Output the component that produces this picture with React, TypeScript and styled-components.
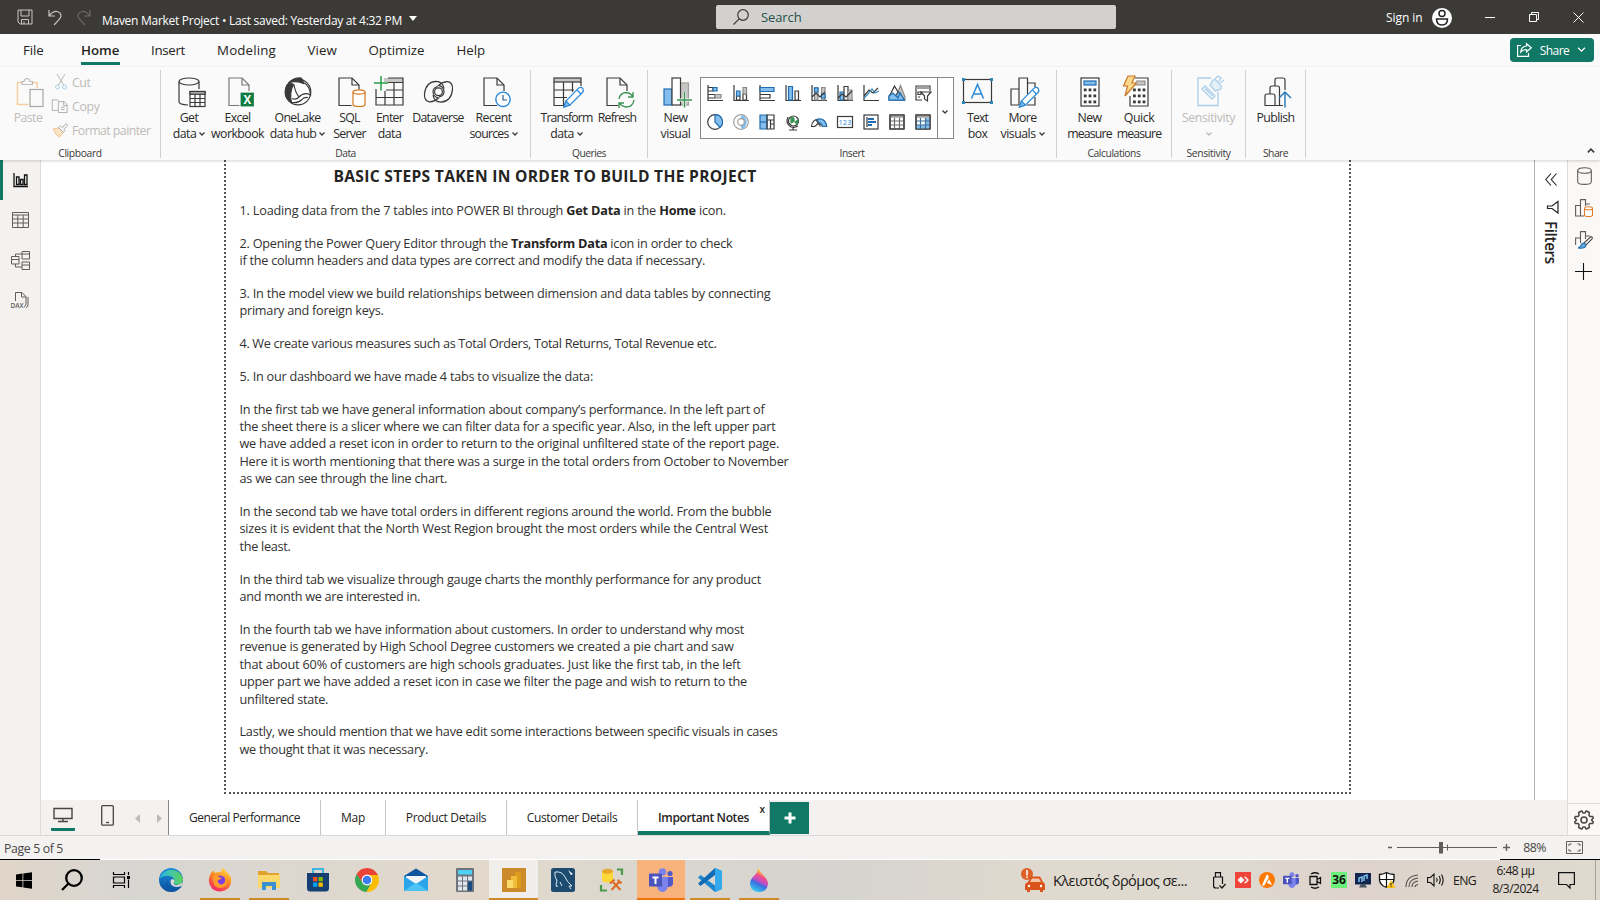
import React, { ReactNode, useLayoutEffect, useRef, useState } from "react";
import styled, { createGlobalStyle } from "styled-components";

const Global = createGlobalStyle`
  * { box-sizing: border-box; }
  html, body { margin: 0; padding: 0; }
  body { font-family: "Open Sans", "Noto Sans", sans-serif; background: #fff; color: #252423; overflow: hidden; }
  svg { display: block; flex: none; overflow: visible; }
`;

/* Text whose tracking is tuned so that it spans a given width */
const FitSpan = styled.span`
  display: inline-block;
  white-space: pre;
  flex: none;
`;
const Fit = ({ w, children }: { w: number; children: ReactNode }) => {
  const ref = useRef<HTMLSpanElement>(null);
  const [ls, setLs] = useState<number | null>(null);
  useLayoutEffect(() => {
    const el = ref.current;
    if (!el || ls !== null) return;
    const n = Math.max(1, (el.textContent || "").length);
    setLs((w - el.getBoundingClientRect().width) / n);
  }, [w, ls]);
  return (
    <FitSpan ref={ref} style={ls === null ? undefined : { letterSpacing: `${ls}px` }}>
      {children}
    </FitSpan>
  );
};

const Icon = ({ w = 30, h = 30, children }: { w?: number; h?: number; children: ReactNode }) => (
  <svg width={w} height={h} viewBox={`0 0 ${w} ${h}`} fill="none" stroke="#3b3a39" strokeWidth="1.2">
    {children}
  </svg>
);

const Window = styled.div`
  width: 1600px;
  height: 900px;
  display: flex;
  flex-direction: column;
  overflow: hidden;
`;
const Slot = styled.div<{ $w: number }>`
  width: ${(p) => p.$w}px;
  flex: none;
  height: 100%;
  display: flex;
  align-items: center;
  justify-content: center;
`;
const Grow = styled.div`
  flex: 1;
`;

/* ---------- title bar ---------- */
const TitleBar = styled.div`
  height: 34px;
  flex: none;
  background: #3b3a37;
  color: #fff;
  display: flex;
  align-items: center;
  font-size: 12px;
`;
const DocName = styled.div`
  display: flex;
  align-items: center;
  gap: 7px;
  margin-left: -5px;
  padding-top: 6px;
  width: 614px;
  flex: none;
`;
const DropMark = styled.div`
  padding-bottom: 4px;
`;
const SearchBox = styled.div`
  width: 400px;
  flex: none;
  height: 24px;
  border-radius: 2px;
  background: #d2d1d0;
  color: #24504a;
  display: flex;
  align-items: center;
  gap: 12px;
  padding-left: 17px;
  font-size: 13px;
`;
const SignIn = styled.div`
  margin-left: 270px;
  display: flex;
  align-items: center;
  gap: 9px;
  padding-top: 1px;
  width: 94px;
  flex: none;
`;

/* ---------- menu ---------- */
const Menu = styled.div`
  height: 33px;
  flex: none;
  background: #fafafa;
  display: flex;
  align-items: flex-start;
  padding-left: 23px;
  font-size: 13.300px;
  color: #252423;
`;
const MenuItem = styled.div<{ $gap: number; $on?: boolean }>`
  height: 31px;
  line-height: 32px;
  margin-right: ${(p) => p.$gap}px;
  font-weight: ${(p) => (p.$on ? 600 : 400)};
  border-bottom: ${(p) => (p.$on ? "3px solid #117865" : "none")};
`;
const ShareButton = styled.div`
  margin: 4px 6px 0 auto;
  width: 84px;
  height: 24px;
  border-radius: 4px;
  background: #117865;
  color: #fff;
  font-size: 12px;
  display: flex;
  align-items: center;
  justify-content: space-between;
  padding: 0 8px 0 7px;
`;

/* ---------- ribbon ---------- */
const Ribbon = styled.div`
  height: 93px;
  flex: none;
  background: #fafafa;
  display: flex;
  padding-top: 3px;
  box-shadow: 0 1px 3px rgba(0, 0, 0, 0.18);
  position: relative;
  z-index: 1;
`;
const Group = styled.div<{ $w: number }>`
  width: ${(p) => p.$w}px;
  height: 88px;
  flex: none;
  border-right: 1px solid #d0cfce;
  display: flex;
  flex-direction: column;
`;
const GroupBody = styled.div<{ $pad?: number }>`
  height: 76px;
  flex: none;
  padding-left: ${(p) => p.$pad || 0}px;
  display: flex;
`;
const GroupLabel = styled.div`
  height: 12px;
  line-height: 15px;
  text-align: center;
  font-size: 10.300px;
  color: #3b3a39;
`;
const Button = styled.div<{ $w: number; $off?: boolean }>`
  width: ${(p) => p.$w}px;
  flex: none;
  display: flex;
  flex-direction: column;
  align-items: center;
  padding-top: 7px;
  font-size: 12.300px;
  color: ${(p) => (p.$off ? "#bdbbb9" : "#2b2a29")};
`;
const ButtonIcon = styled.div<{ $dx: number }>`
  margin-left: ${(p) => p.$dx * 2}px;
`;
const ButtonLine = styled.div`
  height: 16px;
  line-height: 16px;
  display: flex;
  align-items: center;
  gap: 3px;
  white-space: nowrap;
  &:nth-child(2) { margin-top: 3px; }
`;
const ClipColumn = styled.div`
  display: flex;
  flex-direction: column;
  color: #bdbbb9;
  font-size: 12.300px;
`;
const ClipRow = styled.div`
  height: 24px;
  display: flex;
  align-items: center;
  gap: 4px;
`;
const Gallery = styled.div`
  width: 254px;
  flex: none;
  height: 62px;
  margin-top: 7px;
  border: 1px solid #8a8886;
  background: #fff;
  display: flex;
`;
const GalleryGrid = styled.div`
  width: 236px;
  flex: none;
  display: grid;
  grid-template-columns: repeat(9, 26px);
  grid-template-rows: 29px 29px;
  padding-left: 1px;
`;
const GalleryCell = styled.div`
  display: flex;
  align-items: center;
  justify-content: center;
`;
const GalleryMore = styled.div`
  width: 16px;
  border-left: 1px solid #8a8886;
  display: flex;
  align-items: center;
  justify-content: center;
  padding: 7px 2px 0 0;
`;
const Collapse = styled.div`
  margin-left: auto;
  align-self: flex-end;
  padding: 0 5px 7px 0;
`;

const Chev = ({ c = "#3b3a39", s = 6, up = false }: { c?: string; s?: number; up?: boolean }) => (
  <svg width={s} height={s / 2 + 1} viewBox="0 0 6 4" fill="none" stroke={c} strokeWidth={s > 8 ? 0.9 : 1.3}>
    <path d={up ? "M.5 3.5 3 1l2.5 2.5" : "M.5.5 3 3 5.5.5"} />
  </svg>
);

const pencil = (x: number, y: number) => (
  <g transform={`translate(${x} ${y})`}>
    <path d="M1 20 3 14 15.5 1.2Q18-.5 19.8 1.500Q21.200 3.500 19.500 5.500L7 18Z" fill="#fff" stroke="#2b88d8" />
    <path d="M1 20 3 14 7 18Z" fill="#83beec" stroke="#2b88d8" />
    <path d="M14 3l4 4" stroke="#2b88d8" />
  </g>
);
const sheet = (c = "#3b3a39") => (
  <>
    <path d="M14 28.500H1V1H14L21 8V14" stroke={c} />
    <path d="M14 1V8H21" stroke={c} />
  </>
);
const dots = (x: number, y: number) =>
  [0, 1, 2].flatMap((r) =>
    [0, 1, 2].map((c) => (
      <rect key={`${r}${c}`} x={x + c * 4.8} y={y + r * 6} width="2.8" height="2.800" fill="#3b3a39" stroke="none" />
    ))
  );

const dataverseLobe = "M14 6.500Q9 7.500 9 12Q9.500 17 14.500 18Q10 22 5.500 21.800Q0 21 .5 14Q1.500 2 12 1.300Q19 1.500 20 8.500";

const icons: Record<string, ReactNode> = {
  paste: (
    <Icon w={28}>
      <path d="M12.500 27.500H1.500V5.500H6M16 5.500H21V11" stroke="#f5cf9f" strokeWidth="1.500" />
      <path d="M6 7.500V4.500H8Q8.500 1.500 11 1.500T14 4.500H16.500V7.500Z" stroke="#bebbb8" />
      <rect x="14" y="12.500" width="13" height="17" stroke="#a9a7a5" />
    </Icon>
  ),
  getData: (
    <Icon w={28}>
      <ellipse cx="11" cy="4.500" rx="10" ry="3.500" />
      <path d="M1 4.500V25Q1 27.500 10 28M21 4.500V12" />
      <rect x="12" y="14.500" width="15" height="15" fill="#fff" />
      <rect x="12" y="14.500" width="15" height="2.800" fill="#b3b0ad" />
      <path d="M12 21.500H27M12 25.500H27M17 17.500V29.500M22 17.500V29.500" />
    </Icon>
  ),
  excel: (
    <Icon w={27}>
      {sheet("#7a7876")}
      <rect x="12" y="15" width="14.500" height="15" fill="#107c41" stroke="#fafafa" />
      <text x="19.300" y="26.800" textAnchor="middle" fontSize="11.500" fontWeight="700" fill="#fff" stroke="none">X</text>
    </Icon>
  ),
  onelake: (
    <Icon w={28}>
      <circle cx="14" cy="15" r="12.800" fill="#fff" />
      <path d="M4.500 6Q10 .5 17 1Q19.500 3 19.500 6.500Q12 3 4.500 6Z" fill="#3b3a39" />
      <path d="M3.500 7.500Q7 5.500 9.500 7.500Q5 16 7.500 25.500Q-2 20 3.500 7.500Z" fill="#3b3a39" />
      <path d="M19.500 5.500Q26 9 26.500 18Q20 14.500 15 20Q12 23.500 8 21.500M10 7.500Q11 15 15 20" />
      <path d="M8 25.500Q14 26.500 18 22.500Q20 20 24 20.500" />
    </Icon>
  ),
  sql: (
    <Icon w={28}>
      {sheet()}
      <rect x="13.500" y="12.500" width="14" height="18" fill="#fafafa" stroke="none" />
      <path d="M15 15V27.500Q15 29.500 21 29.500T27 27.500V15" fill="#fff" stroke="#d5781f" />
      <ellipse cx="21" cy="15" rx="6" ry="2.200" fill="#fff" stroke="#d5781f" />
    </Icon>
  ),
  enter: (
    <Icon w={30}>
      <rect x="10" y="1" width="19" height="4" fill="#c8c6c4" stroke="none" />
      <path d="M14 1H29V28H2V12M14 5.500H29M12 13H29M2 20.500H29M11 14V28M20 5.500V28" />
      <path d="M7 -1V13.500M0 6H14" stroke="#2a9d4a" strokeWidth="1.500" />
    </Icon>
  ),
  dataverse: (
    <Icon w={29}>
      <g transform="translate(0 3)">
        <path d={dataverseLobe} />
        <path d={dataverseLobe} transform="rotate(180 14.500 11.700)" />
        <circle cx="14.500" cy="11.700" r="3.900" />
      </g>
    </Icon>
  ),
  recent: (
    <Icon w={28}>
      {sheet()}
      <circle cx="20" cy="22.300" r="7.200" fill="#fff" stroke="#2b88d8" strokeWidth="1.400" />
      <path d="M20 18V23H24" stroke="#2b5a88" />
    </Icon>
  ),
  transform: (
    <Icon w={30}>
      <rect x="1" y="1" width="27" height="4" fill="#c8c6c4" />
      <path d="M28 5V9M12 28.500H1V5M1 13H21M1 20.500H14M10.500 5V28M19.500 5V15" />
      {pencil(10, 10)}
    </Icon>
  ),
  refresh: (
    <Icon w={28}>
      {sheet()}
      <rect x="12" y="15" width="16" height="15" fill="#fafafa" stroke="none" />
      <g stroke="#3b9457" strokeWidth="1.400">
        <path d="M13 22Q14 16 20 15.500Q25 16 27 20M27 15V20H22" />
        <path d="M28 23Q27 30 20 30Q15 29 13.500 26M13 31V26H18" />
      </g>
    </Icon>
  ),
  newVisual: (
    <Icon w={29}>
      <rect x="17" y="6" width="8.500" height="22" fill="#c8c6c4" stroke="#a19f9d" />
      <rect x="1" y="12" width="8" height="16" fill="#83beec" stroke="#1f6cb0" />
      <rect x="9" y="1" width="8.500" height="27" fill="#fff" />
      <path d="M21.500 15V30.500M14 23H29" stroke="#fafafa" strokeWidth="3" />
      <path d="M21.500 15V30.500M14 23H29" stroke="#3b9457" strokeWidth="1.500" />
    </Icon>
  ),
  textBox: (
    <Icon w={31}>
      <rect x="1.500" y="2.500" width="28" height="23" />
      <path d="M0 1h3v3h-3zM28 1h3v3h-3zM0 24h3v3h-3zM28 24h3v3h-3z" fill="#2b88b8" stroke="none" />
      <path d="M9.500 21.500 15.500 7.500 21.500 21.500M11.500 17H19.500" stroke="#2b88d8" strokeWidth="1.500" />
    </Icon>
  ),
  moreVisuals: (
    <Icon w={29}>
      <path d="M9 28H1V12H9M9 28V1H17.500V17M17.500 6H25V10M25 20V28H17" />
      {pencil(8.500, 10)}
    </Icon>
  ),
  newMeasure: (
    <Icon w={20}>
      <rect x="1" y="1" width="18" height="28" fill="#fff" />
      <rect x="4" y="4" width="12" height="4" fill="#83beec" stroke="#1f6cb0" />
      {dots(3.800, 11.500)}
    </Icon>
  ),
  quick: (
    <Icon w={27}>
      <path d="M13 1H26V29H8V19" fill="#fff" />
      <path d="M14 4H23V8H12" fill="#c8c6c4" stroke="#8a8886" />
      {dots(11, 11.500)}
      <path d="M6-1H13L10 6H14.500L3 19 5.500 9H1.500Z" fill="#fcd98a" stroke="#c8782a" />
    </Icon>
  ),
  sensitivity: (
    <Icon w={28}>
      <g stroke="#a9cfe8" strokeWidth="1.300">
        <path d="M14 1H1V28.500H21V15" />
        <path d="M5 12 8 9 18 19 15 22ZM8 11.500 15.500 19" />
        <path d="M13 8 16 3Q18 2 20 4L24 9Q25 12 22 13L18 14Z" fill="#e4f0f8" />
        <path d="M18 2 21 -1 24 1 22 4M23 6 27 3" />
      </g>
    </Icon>
  ),
  publish: (
    <Icon w={28}>
      <path d="M1 28.500V19Q1 17 3 17H9Q11 17 11 19V28.500ZM6 17V11Q6 9 8 9H13.500Q15.500 9 15.500 11V28.500M11 9V3Q11 1 13 1H19Q21 1 21 3V13M11 28.500H19" />
      <path d="M21 30.500V15M15 21 21 15 27 21" stroke="#2b7fb8" strokeWidth="1.500" />
    </Icon>
  ),
};

const B = "#83beec";
const D = "#1f6cb0";
const galleryIcons: ReactNode[] = [
  <><path d="M1 0V15.500H16" /><path d="M1 2.500H6V6H1M1 9.500H8V13H1" /><path d="M6 2.500h4V6H6z" fill={B} stroke={D} /><path d="M8 9.500h6V13H8z" fill="#c8c6c4" stroke="#8a8886" /></>,
  <><path d="M1 0V15.500H16" /><path d="M3.500 11H7V15H3.500zM10 9H13.500V15H10z" /><path d="M3.500 6H7v5H3.500z" fill={B} stroke={D} /><path d="M10 2.500h3.500V9H10z" fill="#c8c6c4" stroke="#8a8886" /></>,
  <><path d="M1 0V15.500H16" /><path d="M1 2.500h14V6.500H1z" fill={B} stroke={D} /><path d="M1 9.500H11V13H1" /></>,
  <><path d="M1 0V15.500H16" /><path d="M3.500 1.500H7.500V15h-4z" fill={B} stroke={D} /><path d="M10 6h3.500v9H10z" /></>,
  <><path d="M1 0V15.500H16" /><path d="M3.500 2.500H7v12.500H3.500zM10.500 2.500H14v12.500h-3.500z" fill="#c8c6c4" stroke="#8a8886" /><path d="M3.500 3H7v4H3.500zM10.500 9H14v4h-3.500z" fill={B} stroke={D} /><path d="M1 12 5 8 9 12 14 7" /></>,
  <><path d="M1 0V15.500H16" /><path d="M3 7h4v8H3z" fill={B} stroke={D} /><path d="M7 1.500h4v13.500H7z" fill="#fff" /><path d="M11 5h4v10h-4z" fill="#c8c6c4" stroke="#8a8886" /><path d="M1 13 5 9 9 12 15 6" /></>,
  <><path d="M1 0V15.500H16" /><path d="M1 11 6 5 10 8 15 3" /><path d="M1 13 5 9 9 4 12 8 16 6" stroke="#2b88b8" /></>,
  <><path d="M6 15 11.500 .5 16 12V15z" fill="#c8c6c4" stroke="#8a8886" /><path d="M0 15V11L5.500 5 11 8 15 15z" fill={B} stroke={D} /><path d="M1 10 5.500 1 9 7 5 13Z" fill="#fff" /><path d="M0 15.200V11L4 8 9 13 11 8 15.500 15.200z" fill={B} stroke={D} /></>,
  <><path d="M15 6V1H1V15H7" fill="#fff" /><path d="M1 3H15" strokeWidth="2" stroke="#a19f9d" /><path d="M3 7h3v2.500H3zM3 12h2" /><path d="M6 7H16L12.500 11V16L9.500 14V11Z" fill="#fff" /></>,
  <><circle cx="8" cy="8" r="7.300" fill="#fff" /><path d="M8 8V.7A7.300 7.300 0 0 1 13 13.500Z" fill={B} stroke={D} /></>,
  <><circle cx="8" cy="8" r="7.300" stroke="#a19f9d" /><path d="M8 3A5.500 5.500 0 0 1 8 13" stroke={B} strokeWidth="5" /><circle cx="8" cy="8" r="3.300" fill="#fff" stroke="#a19f9d" /></>,
  <><path d="M1 1h7v14H1z" fill={B} stroke={D} /><path d="M1 8h7" stroke={D} /><path d="M8 1h7v14H8zM8 6H15M11.500 6V15M11.500 10H15" /></>,
  <><circle cx="8.500" cy="7" r="5" fill="#fff" /><path d="M6 4Q8 2 9 5T6 9ZM10 8l3-2-1 4z" fill="#3b9457" stroke="#3b9457" /><path d="M3 3Q0 9 6 13Q10 14 13 12M8 13V16M4 16H12" /></>,
  <><path d="M0.500 12.500A7.500 7.500 0 0 1 15.500 12.500H11.500A3.500 3.500 0 0 0 5 11.500L3.500 12.500Z" fill="#fff" /><path d="M6 5.500Q14 3 15.700 12.500H11.500Q11 9 8 8.500Z" fill={B} stroke={D} /><path d="M5 6 9.500 12.500" /></>,
  <><rect x="0.500" y="2.500" width="15" height="11" fill="#fff" /><text x="8" y="10.800" textAnchor="middle" fontSize="7.500" fill="#2b88d8" stroke="none">123</text></>,
  <><rect x="1" y="1" width="14" height="14" fill="#fff" /><path d="M4 3V13" /><path d="M5 5h6M5 8h8M5 11h4" stroke={D} strokeWidth="1.800" /></>,
  <><rect x="1" y="1" width="14" height="14" fill="#fff" /><path d="M1 2.500H15" strokeWidth="2.500" stroke="#a19f9d" /><path d="M1 7H15M1 11H15M5.500 4V15M10.500 4V15" stroke="#6f6d6b" /><path d="M1 1V15H15V1z" /></>,
  <><rect x="1" y="1" width="14" height="14" fill="#fff" /><path d="M10.500 4H15V15H1V11H10.500z" fill={B} stroke="none" /><path d="M1 2.500H15" strokeWidth="2.500" stroke="#a19f9d" /><path d="M1 7H15M1 11H15M5.500 4V15M10.500 4V15" stroke="#3f6f9c" /><path d="M1 1V15H15V1z" /></>,
];

type Line = [string, number];
const RibbonButton = ({ w, icon, dx = 0, a, b, arrow, off }: { w: number; icon: string; dx?: number; a: Line; b?: Line; arrow?: boolean; off?: boolean }) => (
  <Button $w={w} $off={off}>
    <ButtonIcon $dx={dx}>{icons[icon]}</ButtonIcon>
    <ButtonLine><Fit w={a[1]}>{a[0]}</Fit></ButtonLine>
    {(b || arrow) && (
      <ButtonLine>
        {b && <Fit w={b[1]}>{b[0]}</Fit>}
        {arrow && <Chev c={off ? "#bdbbb9" : "#3b3a39"} />}
      </ButtonLine>
    )}
  </Button>
);

/* ---------- work area ---------- */
const Work = styled.div`
  height: 675px;
  flex: none;
  display: flex;
`;
const LeftRail = styled.div`
  width: 41px;
  flex: none;
  background: #f3f2f1;
  border-right: 1px solid #dedcda;
`;
const ViewButton = styled.div<{ $on?: boolean }>`
  height: 40px;
  border-left: 3px solid ${(p) => (p.$on ? "#117865" : "transparent")};
  padding-right: 2px;
  display: flex;
  align-items: center;
  justify-content: center;
`;
const Center = styled.div`
  flex: 1;
  display: flex;
  flex-direction: column;
`;
const CanvasRow = styled.div`
  height: 640px;
  flex: none;
  display: flex;
`;
const Canvas = styled.div`
  flex: 1;
  background: #fff;
  padding: 0 0 6px 183px;
`;
const Page = styled.div`
  width: 1127px;
  height: 634px;
  border: 2px dotted #555;
  border-top: none;
  padding: 7px 0 0 13.500px;
  font-size: 12.700px;
  line-height: 17.450px;
  color: #333231;
`;
const Heading = styled.div`
  padding-left: 94px;
  font-size: 15.600px;
  line-height: 19px;
  font-weight: 700;
  color: #252423;
  margin-bottom: 16px;
`;
const Para = styled.div`
  margin-bottom: 15.300px;
  b { color: #252423; }
`;
const ParaLine = styled.div`
  height: 17.450px;
  white-space: nowrap;
`;
const FiltersPane = styled.div`
  width: 33px;
  border-left: 1px solid #b3b0ad;
  background: #fff;
  display: flex;
  flex-direction: column;
  align-items: center;
  padding: 13px 0 0 0;
`;
const FiltersLabel = styled.div`
  writing-mode: vertical-rl;
  font-size: 15.300px;
  line-height: 18px;
  font-weight: 600;
  letter-spacing: -0.400px;
  margin-top: 7px;
`;
const RightRail = styled.div`
  width: 33px;
  flex: none;
  background: #faf9f8;
  border-left: 1px solid #dedcda;
  display: flex;
  flex-direction: column;
  align-items: center;
`;
const RailItem = styled.div`
  height: 32px;
  display: flex;
  align-items: center;
`;
const RailFoot = styled.div`
  margin-top: auto;
  width: 100%;
  height: 32px;
  border-top: 1px solid #dedcda;
  display: flex;
  align-items: center;
  justify-content: center;
`;

/* ---------- page tabs ---------- */
const Tabs = styled.div`
  height: 35px;
  flex: none;
  background: #f3f2f1;
  display: flex;
`;
const LayoutTools = styled.div`
  width: 128px;
  display: flex;
  align-items: flex-start;
  padding: 5px 0 0 10px;
  border-right: 1px solid #8a8886;
`;
const LayoutTool = styled.div<{ $w: number; $ml?: number; $on?: boolean }>`
  width: ${(p) => p.$w}px;
  margin-left: ${(p) => p.$ml || 0}px;
  height: 26px;
  border-bottom: 3px solid ${(p) => (p.$on ? "#117865" : "transparent")};
  border-radius: 1px;
  display: flex;
  justify-content: center;
`;
const Tab = styled.div<{ $w: number; $on?: boolean }>`
  width: ${(p) => p.$w}px;
  background: #fff;
  border-right: 1px solid #c8c6c4;
  border-bottom: ${(p) => (p.$on ? "4px solid #117865" : "none")};
  font-weight: ${(p) => (p.$on ? 600 : 400)};
  font-size: 12px;
  line-height: 35px;
  text-align: center;
  position: relative;
`;
const TabClose = styled.span`
  position: absolute;
  right: 4px;
  top: 2px;
  font-size: 10px;
  line-height: 14px;
`;
const AddTab = styled.div`
  width: 39px;
  height: 32px;
  margin-top: 2px;
  background: #117865;
  display: flex;
  align-items: center;
  justify-content: center;
`;

/* ---------- status bar ---------- */
const Status = styled.div`
  height: 25px;
  flex: none;
  background: #f3f2f1;
  border-top: 1px solid #dcdad8;
  border-bottom: 1px solid #fff;
  display: flex;
  align-items: center;
  padding-left: 4px;
  font-size: 12.300px;
  color: #484644;
  position: relative;
`;
const PageCount = styled.div`
  padding-top: 2px;
`;
const Edge = styled.div<{ $right?: boolean }>`
  position: absolute;
  bottom: -1px;
  ${(p) => (p.$right ? "right: 0;" : "left: 0;")}
  width: 100px;
  height: 1px;
  background: #000;
`;

/* ---------- taskbar ---------- */
const Taskbar = styled.div`
  height: 40px;
  flex: none;
  display: flex;
  background: linear-gradient(90deg, #e0d5c8 0%, #d8d6d2 8%, #dcd7cf 18%, #e2d9cb 30%, #dad6cf 42%, #d6d4d0 52%, #e0d9ce 66%, #dfdad1 75%, #ddd3cc 85%, #dfd9ce 100%);
  color: #1b1a19;
`;
const TaskButton = styled.div<{ $w: number; $bg?: string; $line?: string; $inset?: number }>`
  width: ${(p) => p.$w}px;
  flex: none;
  height: 40px;
  display: flex;
  align-items: center;
  justify-content: center;
  background: ${(p) => p.$bg || "transparent"};
  position: relative;
  &::after {
    content: "";
    position: absolute;
    bottom: 0;
    left: ${(p) => p.$inset || 0}px;
    right: ${(p) => p.$inset || 0}px;
    height: 2px;
    background: ${(p) => p.$line || "transparent"};
  }
`;
const News = styled.div`
  display: flex;
  align-items: center;
  gap: 8px;
  font-size: 14.500px;
  width: 186px;
  flex: none;
`;
const Language = styled.div`
  font-size: 12.300px;
`;
const Clock = styled.div`
  width: 61px;
  flex: none;
  font-size: 12px;
  line-height: 18px;
  display: flex;
  flex-direction: column;
  align-items: center;
  padding-top: 2px;
`;
const ShowDesktop = styled.div`
  width: 5px;
  border-left: 1px solid #a5a19b;
`;

const Art = ({ s = 24, children }: { s?: number; children: ReactNode }) => (
  <svg width={s} height={s} viewBox="0 0 24 24" fill="none">{children}</svg>
);

const gold = "#cd8a2b";
const TeamsArt = ({ s }: { s?: number }) => (
  <Art s={s}>
    <circle cx="21" cy="5.500" r="2.600" fill="#5059c9" />
    <circle cx="13.500" cy="4" r="3.700" fill="#7b83eb" />
    <path d="M17 9H24V16Q23 19.500 18 19Z" fill="#5059c9" />
    <path d="M8 9H19V18Q18 24 13 24Q8 23 8 18Z" fill="#7b83eb" />
    <rect y="5.500" width="13" height="13" rx="1" fill="#4b53bc" />
    <path d="M3.500 8.500H9.500V10.500H7.500V16H5.500V10.500H3.500Z" fill="#fff" />
  </Art>
);

const notes: { lines: [ReactNode, number][] }[] = [
  { lines: [[<>1. Loading data from the 7 tables into POWER BI through <b>Get Data</b> in the <b>Home</b> icon.</>, 486.500]] },
  { lines: [[<>2. Opening the Power Query Editor through the <b>Transform Data</b> icon in order to check</>, 493], ["if the column headers and data types are correct and modify the data if necessary.", 465.500]] },
  { lines: [["3. In the model view we build relationships between dimension and data tables by connecting", 531], ["primary and foreign keys.", 144]] },
  { lines: [["4. We create various measures such as Total Orders, Total Returns, Total Revenue etc.", 477]] },
  { lines: [["5. In our dashboard we have made 4 tabs to visualize the data:", 353.500]] },
  { lines: [
    ["In the first tab we have general information about company’s performance. In the left part of", 525],
    ["the sheet there is a slicer where we can filter data for a specific year. Also, in the left upper part", 536],
    ["we have added a reset icon in order to return to the original unfiltered state of the report page.", 539.500],
    ["Here it is worth mentioning that there was a surge in the total orders from October to November", 549],
    ["as we can see through the line chart.", 207.500],
  ] },
  { lines: [
    ["In the second tab we have total orders in different regions around the world. From the bubble", 532],
    ["sizes it is evident that the North West Region brought the most orders while the Central West", 528.500],
    ["the least.", 51],
  ] },
  { lines: [["In the third tab we visualize through gauge charts the monthly performance for any product", 521.500], ["and month we are interested in.", 180.500]] },
  { lines: [
    ["In the fourth tab we have information about customers. In order to understand why most", 504.500],
    ["revenue is generated by High School Degree customers we created a pie chart and saw", 494],
    ["that about 60% of customers are high schools graduates. Just like the first tab, in the left", 501],
    ["upper part we have added a reset icon in case we filter the page and wish to return to the", 507.500],
    ["unfiltered state.", 88.500],
  ] },
  { lines: [["Lastly, we should mention that we have edit some interactions between specific visuals in cases", 538], ["we thought that it was necessary.", 188.500]] },
];

export default function App() {
  return (
    <Window>
      <Global />
      <TitleBar>
        <Slot $w={49}>
          <svg width="16" height="16" viewBox="0 0 16 16" fill="none" stroke="#c8c6c4"><path d="M1 1H15V15H3L1 13ZM4 1V7H12V1M4.500 15V10.500H11.500V15M7 12.500V15" /></svg>
        </Slot>
        <Slot $w={12}>
          <svg width="14" height="15" viewBox="0 0 14 15" fill="none" stroke="#c8c6c4" strokeWidth="1.200"><path d="M1 0V6H7M1 6Q5 1 9 1.500Q13 2.500 13 6Q13 8 6 15" /></svg>
        </Slot>
        <Slot $w={46}>
          <svg width="14" height="15" viewBox="0 0 14 15" fill="none" stroke="#6b6967" strokeWidth="1.200"><path d="M13 0V6H7M13 6Q9 1 5 1.500Q1 2.500 1 6Q1 8 8 15" /></svg>
        </Slot>
        <DocName>
          <Fit w={300}>Maven Market Project • Last saved: Yesterday at 4:32 PM</Fit>
          <DropMark><svg width="8" height="5" viewBox="0 0 8 5"><path d="M0 0H8L4 5Z" fill="#fff" /></svg></DropMark>
        </DocName>
        <SearchBox>
          <svg width="16" height="16" viewBox="0 0 16 16" fill="none" stroke="#3b3a39" strokeWidth="1.200"><circle cx="10" cy="6" r="5.300" /><path d="M6.200 9.800 0.500 15.500" /></svg>
          <Fit w={40.500}>Search</Fit>
        </SearchBox>
        <SignIn>
          <Fit w={36.500}>Sign in</Fit>
          <svg width="20" height="20" viewBox="0 0 20 20" fill="none"><circle cx="10" cy="10" r="10" fill="#fff" /><circle cx="10" cy="5.500" r="3" stroke="#222" strokeWidth="1.500" /><path d="M4.500 11H15.500Q15.500 17 10 17T4.500 11Z" stroke="#222" strokeWidth="1.500" /></svg>
        </SignIn>
        <Slot $w={20}><svg width="10" height="2"><path d="M0 1.500H10" stroke="#fff" /></svg></Slot>
        <Slot $w={68}><svg width="10" height="10" viewBox="0 0 10 10" fill="none" stroke="#fff"><path d="M.5 2.500H7.500V9.500H.5ZM2.500 2V.5H9.500V7.500H8" /></svg></Slot>
        <Slot $w={20}><svg width="11" height="11" viewBox="0 0 11 11" stroke="#fff"><path d="M.5.5 10.500 10.500M10.500.5.5 10.500" /></svg></Slot>
      </TitleBar>

      <Menu>
        <MenuItem $gap={37.500}><Fit w={20.500}>File</Fit></MenuItem>
        <MenuItem $gap={31.500} $on><Fit w={38.500}>Home</Fit></MenuItem>
        <MenuItem $gap={32}><Fit w={34}>Insert</Fit></MenuItem>
        <MenuItem $gap={31.500}><Fit w={59}>Modeling</Fit></MenuItem>
        <MenuItem $gap={31.500}><Fit w={29.500}>View</Fit></MenuItem>
        <MenuItem $gap={32}><Fit w={56}>Optimize</Fit></MenuItem>
        <MenuItem $gap={0}><Fit w={28.500}>Help</Fit></MenuItem>
        <ShareButton>
          <svg width="15" height="14" viewBox="0 0 15 14" fill="none" stroke="#fff" strokeWidth="1.200"><path d="M4 2.500H.6V13.400H11.500V10M9.500 0.800 14.300 4.800 9.500 9V6.500Q6 6.500 3.800 9Q4 3.500 9.500 3Z" /></svg>
          <Fit w={29.500}>Share</Fit>
          <Chev c="#fff" s={9} />
        </ShareButton>
      </Menu>

      <Ribbon>
        <Group $w={161}>
          <GroupBody $pad={2}>
            <Button $w={52} $off>
              <ButtonIcon $dx={2}>{icons.paste}</ButtonIcon>
              <ButtonLine><Fit w={28.500}>Paste</Fit></ButtonLine>
            </Button>
            <ClipColumn>
              <ClipRow>
                <svg width="14" height="16" viewBox="0 0 14 16" fill="none" stroke="#bebbb8"><path d="M3 0 9.500 11M11 0 4.500 11" /><circle cx="3.500" cy="13" r="2" stroke="#a9cfe8" /><circle cx="10.500" cy="13" r="2" stroke="#a9cfe8" /></svg>
                <Fit w={18.500}>Cut</Fit>
              </ClipRow>
              <ClipRow>
                <svg width="14" height="16" viewBox="0 0 16 16" fill="none" stroke="#a9a7a5"><path d="M4 13H-2V1H4L6 3M6 3H12L15 7V15.500H5V3ZM11 3V7.500H15M8 9.500H12M8 12H12" /></svg>
                <Fit w={27.500}>Copy</Fit>
              </ClipRow>
              <ClipRow>
                <svg width="14" height="15" viewBox="0 0 15 15" fill="none"><path d="M-1 6 5 4.500 10 9.500 6 14.500Q2 13 -1 6Z" fill="#fbe3c6" stroke="#f0bf88" /><path d="M5 4.500 7 2.500 9 4.500 13 0 15 2 10.500 6 12 7.500 10 9.500Z" stroke="#a9a7a5" /></svg>
                <Fit w={78.500}>Format painter</Fit>
              </ClipRow>
            </ClipColumn>
          </GroupBody>
          <GroupLabel><Fit w={43.500}>Clipboard</Fit></GroupLabel>
        </Group>
        <Group $w={370}>
          <GroupBody>
            <RibbonButton w={56} icon="getData" dx={2.500} a={["Get", 18.500]} b={["data", 23.500]} arrow />
            <RibbonButton w={41} icon="excel" dx={3.500} a={["Excel", 26]} b={["workbook", 53]} />
            <RibbonButton w={79} icon="onelake" dx={0.500} a={["OneLake", 46]} b={["data hub", 46.500]} arrow />
            <RibbonButton w={25} icon="sql" dx={2.500} a={["SQL", 20.500]} b={["Server", 32.500]} />
            <RibbonButton w={55} icon="enter" dx={-1} a={["Enter", 27]} b={["data", 23.500]} />
            <RibbonButton w={42} icon="dataverse" a={["Dataverse", 51.500]} />
            <RibbonButton w={69} icon="recent" dx={3} a={["Recent", 36]} b={["sources", 39]} arrow />
          </GroupBody>
          <GroupLabel><Fit w={20.500}>Data</Fit></GroupLabel>
        </Group>
        <Group $w={117}>
          <GroupBody>
            <RibbonButton w={71} icon="transform" dx={1.500} a={["Transform", 52]} b={["data", 23.500]} arrow />
            <RibbonButton w={30} icon="refresh" dx={2.500} a={["Refresh", 38.500]} />
          </GroupBody>
          <GroupLabel><Fit w={34}>Queries</Fit></GroupLabel>
        </Group>
        <Group $w={409}>
          <GroupBody $pad={3}>
            <RibbonButton w={49} icon="newVisual" dx={2} a={["New", 24]} b={["visual", 30]} />
            <Gallery>
              <GalleryGrid>
                {galleryIcons.map((g, i) => (
                  <GalleryCell key={i}><Icon w={16} h={16}>{g}</Icon></GalleryCell>
                ))}
              </GalleryGrid>
              <GalleryMore><Chev s={6} /></GalleryMore>
            </Gallery>
            <RibbonButton w={47} icon="textBox" a={["Text", 21]} b={["box", 19.500]} />
            <RibbonButton w={43} icon="moreVisuals" dx={2} a={["More", 28]} b={["visuals", 35]} arrow />
          </GroupBody>
          <GroupLabel><Fit w={25}>Insert</Fit></GroupLabel>
        </Group>
        <Group $w={115}>
          <GroupBody>
            <RibbonButton w={65} icon="newMeasure" a={["New", 24]} b={["measure", 44.500]} />
            <RibbonButton w={34} icon="quick" dx={-4} a={["Quick", 30.500]} b={["measure", 44.500]} />
          </GroupBody>
          <GroupLabel><Fit w={53}>Calculations</Fit></GroupLabel>
        </Group>
        <Group $w={74}>
          <GroupBody>
            <RibbonButton w={73} icon="sensitivity" dx={2.500} a={["Sensitivity", 53]} arrow off />
          </GroupBody>
          <GroupLabel><Fit w={44}>Sensitivity</Fit></GroupLabel>
        </Group>
        <Group $w={60}>
          <GroupBody>
            <RibbonButton w={59} icon="publish" dx={2} a={["Publish", 38]} />
          </GroupBody>
          <GroupLabel><Fit w={25}>Share</Fit></GroupLabel>
        </Group>
        <Collapse><Chev s={8} up /></Collapse>
      </Ribbon>

      <Work>
        <LeftRail>
          <ViewButton $on>
            <svg width="16" height="16" viewBox="0 0 16 16" fill="none" stroke="#111" strokeWidth="1.300"><path d="M1 1V14.500H15M3.500 5H6V12.500H3.500ZM7.500 7.500H10V12.500H7.500ZM11.500 3H14V12.500H11.500Z" /></svg>
          </ViewButton>
          <ViewButton>
            <svg width="17" height="16" viewBox="0 0 17 16" fill="none" stroke="#605e5c"><path d="M.5.5H16.500V15.500H.5ZM.5 3H16.500M.5 7H16.500M.5 11H16.500M5.800 3V15.500M11.200 3V15.500" /></svg>
          </ViewButton>
          <ViewButton>
            <svg width="19" height="19" viewBox="0 0 19 19" fill="none" stroke="#605e5c"><path d="M.5 5.500H8V13H.5ZM.5 8.500H8M11 .5H18.500V8H11ZM11 3H18.500M11 11H18.500V18.500H11ZM11 14H18.500M4.500 5.500V3H11M4.500 13V16H11" /></svg>
          </ViewButton>
          <ViewButton>
            <svg width="20" height="18" viewBox="0 0 20 18" fill="none" stroke="#605e5c"><path d="M4.500 10V1.500H11L15 5.500V13Q15 15 13 16M10.500 1.500V6H15M17 6V14Q17 16 15 16.500" /><text x="-.5" y="16.500" fontSize="6.500" fontWeight="600" fill="#605e5c" stroke="none">DAX</text></svg>
          </ViewButton>
        </LeftRail>
        <Center>
          <CanvasRow>
            <Canvas>
              <Page>
                <Heading><Fit w={423}>BASIC STEPS TAKEN IN ORDER TO BUILD THE PROJECT</Fit></Heading>
                {notes.map((p, i) => (
                  <Para key={i}>
                    {p.lines.map(([t, w], j) => (
                      <ParaLine key={j}><Fit w={w}>{t}</Fit></ParaLine>
                    ))}
                  </Para>
                ))}
              </Page>
            </Canvas>
            <FiltersPane>
              <svg width="12" height="13" viewBox="0 0 12 13" fill="none" stroke="#252423" strokeWidth="1.100"><path d="M6 .5.8 6.500 6 12.500M11.500.5 6.300 6.500 11.500 12.500" /></svg>
              <svg width="16" height="28" viewBox="0 0 16 28" fill="none" stroke="#252423" strokeWidth="1.200"><path d="M15 15.500V27L9 22.500H4.500V20H9Z" /></svg>
              <FiltersLabel>Filters</FiltersLabel>
            </FiltersPane>
          </CanvasRow>
          <Tabs>
            <LayoutTools>
              <LayoutTool $w={24} $on>
                <svg width="20" height="18" viewBox="0 0 20 18" fill="none" stroke="#484644" strokeWidth="1.400"><path d="M1 3.500H19V13.500H1ZM10 13.500V16.500M5 16.500H15" /></svg>
              </LayoutTool>
              <LayoutTool $w={14} $ml={25}>
                <svg width="13" height="21" viewBox="0 0 13 21" fill="none" stroke="#484644" strokeWidth="1.300"><rect x=".7" y=".7" width="11.600" height="19.500" rx="1" /><path d="M5 17.500H8" /></svg>
              </LayoutTool>
              <LayoutTool $w={6} $ml={20}><svg width="5" height="26" viewBox="0 0 5 26"><path d="M5 9V18L0 13.500Z" fill="#bdbbb9" /></svg></LayoutTool>
              <LayoutTool $w={6} $ml={16}><svg width="5" height="26" viewBox="0 0 5 26"><path d="M0 9V18L5 13.500Z" fill="#bdbbb9" /></svg></LayoutTool>
            </LayoutTools>
            <Tab $w={152}><Fit w={111}>General Performance</Fit></Tab>
            <Tab $w={65}><Fit w={24}>Map</Fit></Tab>
            <Tab $w={121}><Fit w={80.500}>Product Details</Fit></Tab>
            <Tab $w={131}><Fit w={90.500}>Customer Details</Fit></Tab>
            <Tab $w={132} $on><Fit w={91}>Important Notes</Fit><TabClose>x</TabClose></Tab>
            <AddTab><svg width="12" height="12"><path d="M6 .5V11.500M.5 6H11.500" stroke="#fff" strokeWidth="3" /></svg></AddTab>
          </Tabs>
        </Center>
        <RightRail>
          <RailItem>
            <svg width="15" height="18" viewBox="0 0 15 18" fill="none" stroke="#605e5c" strokeWidth="1.100"><ellipse cx="7.500" cy="3.500" rx="6.800" ry="2.800" /><path d="M.7 3.500V15Q1 17.400 7.500 17.400T14.300 15V3.500" /></svg>
          </RailItem>
          <RailItem>
            <svg width="18" height="18" viewBox="0 0 18 18" fill="none" stroke="#605e5c" strokeWidth="1.100"><path d="M9 17H.6V6.500H5.500M5.500 17V.6H10.500V7M10.500 5H15" /><path d="M9.500 9.500V16Q9.500 17.500 13.500 17.500T17.500 16V9.500" stroke="#e07b25" fill="#fff" /><ellipse cx="13.500" cy="9.300" rx="4" ry="1.500" stroke="#e07b25" fill="#fff" /></svg>
          </RailItem>
          <RailItem>
            <svg width="18" height="18" viewBox="0 0 18 18" fill="none" stroke="#605e5c" strokeWidth="1.100"><path d="M.6 14V7H5.500M5.500 12V.6H10.500V8M10.500 5H15" /><path d="M9 12 16 5.500Q18 6 17 8L11 14Z" fill="#fff" stroke="#484644" /><path d="M3 17Q6 16 6.500 13Q9 11 11 14Q11 18 3 17Z" fill="#5ea9e0" stroke="#2b6fa8" /></svg>
          </RailItem>
          <RailItem>
            <svg width="18" height="18"><path d="M8.500 0V17M0 8.500H17" stroke="#111" strokeWidth="1.100" /></svg>
          </RailItem>
          <RailFoot>
            <svg width="20" height="20" viewBox="0 0 20 20" fill="none" stroke="#484644" strokeWidth="1.500" strokeLinejoin="round"><circle cx="10" cy="10" r="3" /><path d="M7.500 1H8L9 3H11L12 1H12.500L15.300 2.500 15 5.500 16 6.500 18.700 6.500 19.300 8 17.500 10 19.300 12 18.700 13.500 16 13.500 15 14.500 15.300 17.500 12.500 19H12L11 17H9L8 19H7.500L4.700 17.500 5 14.500 4 13.500 1.300 13.500.7 12 2.500 10 .7 8 1.300 6.500 4 6.500 5 5.500 4.700 2.500Z" /></svg>
          </RailFoot>
        </RightRail>
      </Work>

      <Status>
        <PageCount><Fit w={59}>Page 5 of 5</Fit></PageCount>
        <Grow />
        <svg width="125" height="14" viewBox="0 0 125 14" stroke="#605e5c" fill="none"><path d="M1 6.500H5M116 6.500H123M119.500 3V10" strokeWidth="1.400" /><path d="M10 6.500H110M60.500 3.500V9.500" /><path d="M54 1V12.500" strokeWidth="4" /></svg>
        <Slot $w={45}><Fit w={22.500}>88%</Fit></Slot>
        <Slot $w={34}>
          <svg width="17" height="13" viewBox="0 0 17 13" fill="none" stroke="#605e5c"><path d="M.5.5H16.500V12.500H.5ZM3 5V3H5.500M11.500 3H14V5M14 8V10H11.500M5.500 10H3V8" /></svg>
        </Slot>
        <Slot $w={9} />
        <Edge />
        <Edge $right />
      </Status>

      <Taskbar>
        <TaskButton $w={48}><svg width="16" height="17" viewBox="0 0 16 17"><path d="M0 2.500 6.500 1.600V8H0ZM7.300 1.400 16 .2V8H7.300ZM0 8.800H6.500V15.300L0 14.400ZM7.300 8.800H16V16.700L7.300 15.500Z" fill="#000" /></svg></TaskButton>
        <TaskButton $w={48}><svg width="22" height="22" viewBox="0 0 22 22" fill="none" stroke="#000" strokeWidth="2.300"><circle cx="13" cy="9" r="7.800" /><path d="M7.500 14.500 1 21" /></svg></TaskButton>
        <TaskButton $w={50}><svg width="17" height="16" viewBox="0 0 17 16" fill="none" stroke="#000"><path d="M.5 0V2.500H11.500V0M.5 16V13.500H11.500V16M.5 5H11.500V11H.5ZM15.500 0V3M15.500 7.500V16" strokeWidth="1.200" /><rect x="14" y="4" width="3" height="3" fill="#000" stroke="none" /></svg></TaskButton>
        <TaskButton $w={49}>
          <Art>
            <defs>
              <linearGradient id="edgeTop" x1="0" x2="1"><stop offset="0" stopColor="#2bb8ea" /><stop offset="1" stopColor="#5dd25a" /></linearGradient>
              <linearGradient id="edgeLow" x1="0" x2="0" y2="1"><stop offset="0" stopColor="#1b8fdc" /><stop offset="1" stopColor="#0c4f9c" /></linearGradient>
            </defs>
            <circle cx="12" cy="12" r="12" fill="url(#edgeLow)" />
            <path d="M.5 11A12 12 0 0 1 24 11.500Q23.500 17 18 16.800Q14 16.500 15 14Q16 9 10.500 8Q4 7 .5 11Z" fill="url(#edgeTop)" />
            <path d="M8 12Q8 20 15 21Q19 21 22 18.500Q24 18 21 20A12 12 0 0 1 12 24Q5 20 8 12Z" fill="#0d58a8" />
            <path d="M15 14Q13.500 17 18 17.200Q21 17 24 14L22.500 18Q16 20.500 12.500 17Q10 12 13.500 11Q16 11.500 15 14Z" fill="#ddd8d1" />
          </Art>
        </TaskButton>
        <TaskButton $w={49} $line={gold} $inset={4.500}>
          <Art>
            <defs><linearGradient id="ff" x1=".8" y1="0" x2=".3" y2="1"><stop offset="0" stopColor="#ffe14a" /><stop offset=".45" stopColor="#ff8a1f" /><stop offset="1" stopColor="#f0236b" /></linearGradient></defs>
            <path d="M3 5 5 2.500 7 5Q10 3.500 13 4Q13 1 15.500 0Q17 3 20 5Q24 9 23 15Q21 23 12 23.500Q2 23 .8 13Q1 8 3 5Z" fill="url(#ff)" />
            <circle cx="12" cy="13" r="5.500" fill="#7a3fe0" />
            <path d="M5 8Q9 6 11 9L14 10Q12 12 10 12Q9 16 14 16.500Q18 15 17 10Q21 13 18 18Q12 22 7 18Q4 13 5 8Z" fill="#ff9a2c" />
          </Art>
        </TaskButton>
        <TaskButton $w={49} $line={gold} $inset={4.500}>
          <Art>
            <path d="M1 3H9L11 5H22V20H1Z" fill="#e0a32e" /><path d="M1 7H23V20H1Z" fill="#fbd86b" />
            <path d="M5 14H19V22H15V18H9V22H5Z" fill="#3a8fd0" />
          </Art>
        </TaskButton>
        <TaskButton $w={49}>
          <Art>
            <path d="M7 6V1H17V6" stroke="#3fb4e0" strokeWidth="2" />
            <path d="M1 5H23V20Q23 23.500 20 23.500H4Q1 23.500 1 20Z" fill="#153f73" />
            <path d="M7 9h4.300v4.300H7z" fill="#f25022" /><path d="M12.500 9h4.300v4.300h-4.300z" fill="#7fba00" /><path d="M7 14.500h4.300v4.300H7z" fill="#00a4ef" /><path d="M12.500 14.500h4.300v4.300h-4.300z" fill="#ffb900" />
          </Art>
        </TaskButton>
        <TaskButton $w={49}>
          <Art>
            <path d="M1.600 6A12 12 0 0 0 11.500 24L17 14.500 12 16 7.500 14Z" fill="#34a853" />
            <path d="M12 7H22.900A12 12 0 0 1 11.500 24L16.500 14.500Z" fill="#fbbc05" />
            <path d="M1.600 6A12 12 0 0 1 22.400 6L22.900 7H12L7.500 14.500Z" fill="#ea4335" />
            <circle cx="12" cy="12" r="5.400" fill="#fff" /><circle cx="12" cy="12" r="4.300" fill="#3b7ded" />
          </Art>
        </TaskButton>
        <TaskButton $w={49}>
          <Art>
            <path d="M0 8 12 .5 24 8V12H0Z" fill="#0f559e" /><path d="M2 8H22V14L12 17 2 14Z" fill="#f4f6f8" />
            <path d="M0 8 12 16 24 8V23H0Z" fill="#2aa5ea" /><path d="M0 23 12 14.500 24 23Z" fill="#4cc2f5" />
            <path d="M2 8H22L12 15Z" fill="#f4f6f8" />
          </Art>
        </TaskButton>
        <TaskButton $w={49}>
          <Art>
            <rect x="3" width="18" height="24" rx="1" fill="#6d747b" /><rect x="5" y="2" width="14" height="4.500" fill="#4fd0f5" />
            <path d="M5 8.500h4v4H5zM10 8.500h4v4h-4zM15 8.500h4v4h-4zM5 13.500h4v4H5zM10 13.500h4v4h-4zM5 18.500h4v4H5zM10 18.500h4v4h-4z" fill="#dfe6ec" /><path d="M15 13.500h4v9h-4z" fill="#174a80" />
          </Art>
        </TaskButton>
        <TaskButton $w={49} $bg="#f0eeea" $line={gold}>
          <Art>
            <rect width="24" height="24" fill="#cd8a2b" /><path d="M13 4H19V20H13Z" fill="#dd9b1c" /><path d="M9 8H15V20H9Z" fill="#f0bd3a" /><path d="M5 12H11V20H5Z" fill="#fbdc6b" />
          </Art>
        </TaskButton>
        <TaskButton $w={49}>
          <Art>
            <rect width="24" height="24" rx="2.500" fill="#1d4c70" />
            <path d="M7 18Q5 20 5 16L6 13Q3 8 4 4Q11 3 14 9Q16 14 21 18L18 18 20 21M9 14 11 18" stroke="#d8e8f2" strokeWidth="1" /><path d="M17 2 22 6 20 7Z" fill="#fff" />
          </Art>
        </TaskButton>
        <TaskButton $w={50}>
          <Art>
            <path d="M2 3V13Q7 16 13 13V3Z" fill="#fbd738" /><ellipse cx="7.500" cy="3.200" rx="5.500" ry="2.500" fill="#e8a62c" />
            <path d="M17 1.500H22V7M1 17V22.500H7" stroke="#4b9b4d" strokeWidth="2.200" /><path d="M11.500 22 20 13M13 14 20.500 22" stroke="#de6b24" strokeWidth="2" /><path d="M10 15.500 14.500 11.500M18.500 11.500V14.500H22" stroke="#de6b24" strokeWidth="2" />
          </Art>
        </TaskButton>
        <TaskButton $w={48} $bg="#f8b27c" $line="#f2720c"><TeamsArt /></TaskButton>
        <TaskButton $w={50} $line={gold} $inset={5}>
          <Art>
            <path d="M17 0 24 3V21L17 24 0 9.500 2.500 7 17 17.500Z" fill="#1c86cf" /><path d="M17 0V7L2.500 18 0 15.500Z" fill="#0f6cb5" /><path d="M17 0 24 3V21L17 24Z" fill="#35a9ee" />
          </Art>
        </TaskButton>
        <TaskButton $w={48} $line={gold} $inset={4}>
          <Art>
            <defs><linearGradient id="drop" x1=".7" y1="0" x2=".3" y2="1"><stop offset=".15" stopColor="#fbc22d" /><stop offset=".35" stopColor="#ef4b8e" /><stop offset=".55" stopColor="#b84fc9" /><stop offset=".65" stopColor="#3a6fe0" /><stop offset="1" stopColor="#3ad0f0" /></linearGradient></defs>
            <path d="M11 0Q13 4 17 8Q21 12 21 16Q20 24 12 24Q4 24 3 16Q3 11 8 7Q11 4 11 0Z" fill="url(#drop)" />
          </Art>
        </TaskButton>
        <Grow />
        <News>
          <svg width="24" height="24" viewBox="0 0 24 24"><circle cx="6" cy="6" r="6" fill="#dd6027" /><path d="M5.200 2H6.800V7.500H5.200ZM5.200 8.500H6.800V10H5.200Z" fill="#fff" /><path d="M10 8.500H19L22 14Q24 15 24 17V22H22V24H19V22H9V24H6V22H4V17Q4 15 7 14Z" fill="#d9541c" /><path d="M11 10.500H18L20 14H9Z" fill="#f7c5a8" /><circle cx="8" cy="18" r="1.200" fill="#fff" /><circle cx="20" cy="18" r="1.200" fill="#fff" /></svg>
          <Fit w={134}>Κλειστός δρόμος σε...</Fit>
        </News>
        <Slot $w={24}><svg width="12" height="17" viewBox="0 0 12 17" fill="none" stroke="#111" strokeWidth="1.200"><path d="M2.500 5V.6H7.500V5M.6 5H9.500V12M.6 5V14Q.6 16 3 16H6M6.500 13.500 9 16 12.500 12" /></svg></Slot>
        <Slot $w={24}><svg width="16" height="16"><rect width="16" height="16" fill="#ef443b" /><path d="M6 4.500 9.500 8 6 11.500 2.500 8ZM9 5 10.500 4.500 14 8 10.500 11.500 9 11 12 8Z" fill="#fff" /></svg></Slot>
        <Slot $w={24}><svg width="16" height="16"><circle cx="8" cy="8" r="8" fill="#ff7800" /><path d="M3 13 8 2 10 5 5 14ZM8 11 10 7 13 13Z" fill="#fff" /></svg></Slot>
        <Slot $w={24}><TeamsArt s={16} /></Slot>
        <Slot $w={24}><svg width="12" height="17" viewBox="0 0 12 17" fill="none" stroke="#111" strokeWidth="1.300"><path d="M2 2Q6-.5 10 2M2 15Q6 17.500 10 15M1 4.500H8V12.500H1ZM8 7.500 11.500 5.500V11.500L8 9.500" /></svg></Slot>
        <Slot $w={24}><svg width="16" height="16"><rect width="16" height="16" fill="#6cf07c" /><text x="8" y="12.300" textAnchor="middle" fontSize="12" fontWeight="700" fill="#111">36</text></svg></Slot>
        <Slot $w={24}><svg width="16" height="15"><rect width="16" height="11.500" fill="#14264f" /><path d="M4 9V5L7 4V9M9 8V3L12 2V6" stroke="#7cc2ee" strokeWidth="1.500" fill="none" /><path d="M6 11H10L12 14.500H4Z" fill="#4a5560" /></svg></Slot>
        <Slot $w={24}><svg width="16" height="16" viewBox="0 0 16 16"><path d="M7.500.5Q11 2.500 15 2.500V8Q14 13 7.500 15.500Q1 13 .5 8V2.500Q4 2.500 7.500.5Z" fill="#fff" stroke="#111" strokeWidth="1.300" /><path d="M7.500 1V15M1 7.500H15" stroke="#111" strokeWidth="1.200" /><path d="M12 8 16.500 16H7.500Z" fill="#fbc31c" /><path d="M12 11V13.500M12 14.300V15.200" stroke="#111" /></svg></Slot>
        <Slot $w={24}><svg width="13" height="13" viewBox="0 0 13 13" fill="none" stroke="#55524f" strokeWidth="1.100"><path d="M1 13Q1 2 13 1M4 13Q4 5 13 4M7 13Q7 8 13 7M10 13Q10 11 13 10.500" /></svg></Slot>
        <Slot $w={24}><svg width="17" height="14" viewBox="0 0 17 14" fill="none" stroke="#111" strokeWidth="1.100"><path d="M.6 4.500H3.500L7 1V13L3.500 9.500H.6ZM9.500 5Q11 7 9.500 9M12 3Q14.500 7 12 11M14.500 1.500Q17.800 7 14.500 12.500" /></svg></Slot>
        <Slot $w={35}><Language><Fit w={23}>ENG</Fit></Language></Slot>
        <Slot $w={3} />
        <Clock>
          <Fit w={38}>6:48 μμ</Fit>
          <Fit w={46}>8/3/2024</Fit>
        </Clock>
        <Slot $w={41}><svg width="17" height="17" viewBox="0 0 17 17" fill="none" stroke="#111" strokeWidth="1.200"><path d="M.6.6H16.400V12.500H12V16L8.500 12.500H.6Z" /></svg></Slot>
        <Slot $w={8} />
        <ShowDesktop />
      </Taskbar>
    </Window>
  );
}
